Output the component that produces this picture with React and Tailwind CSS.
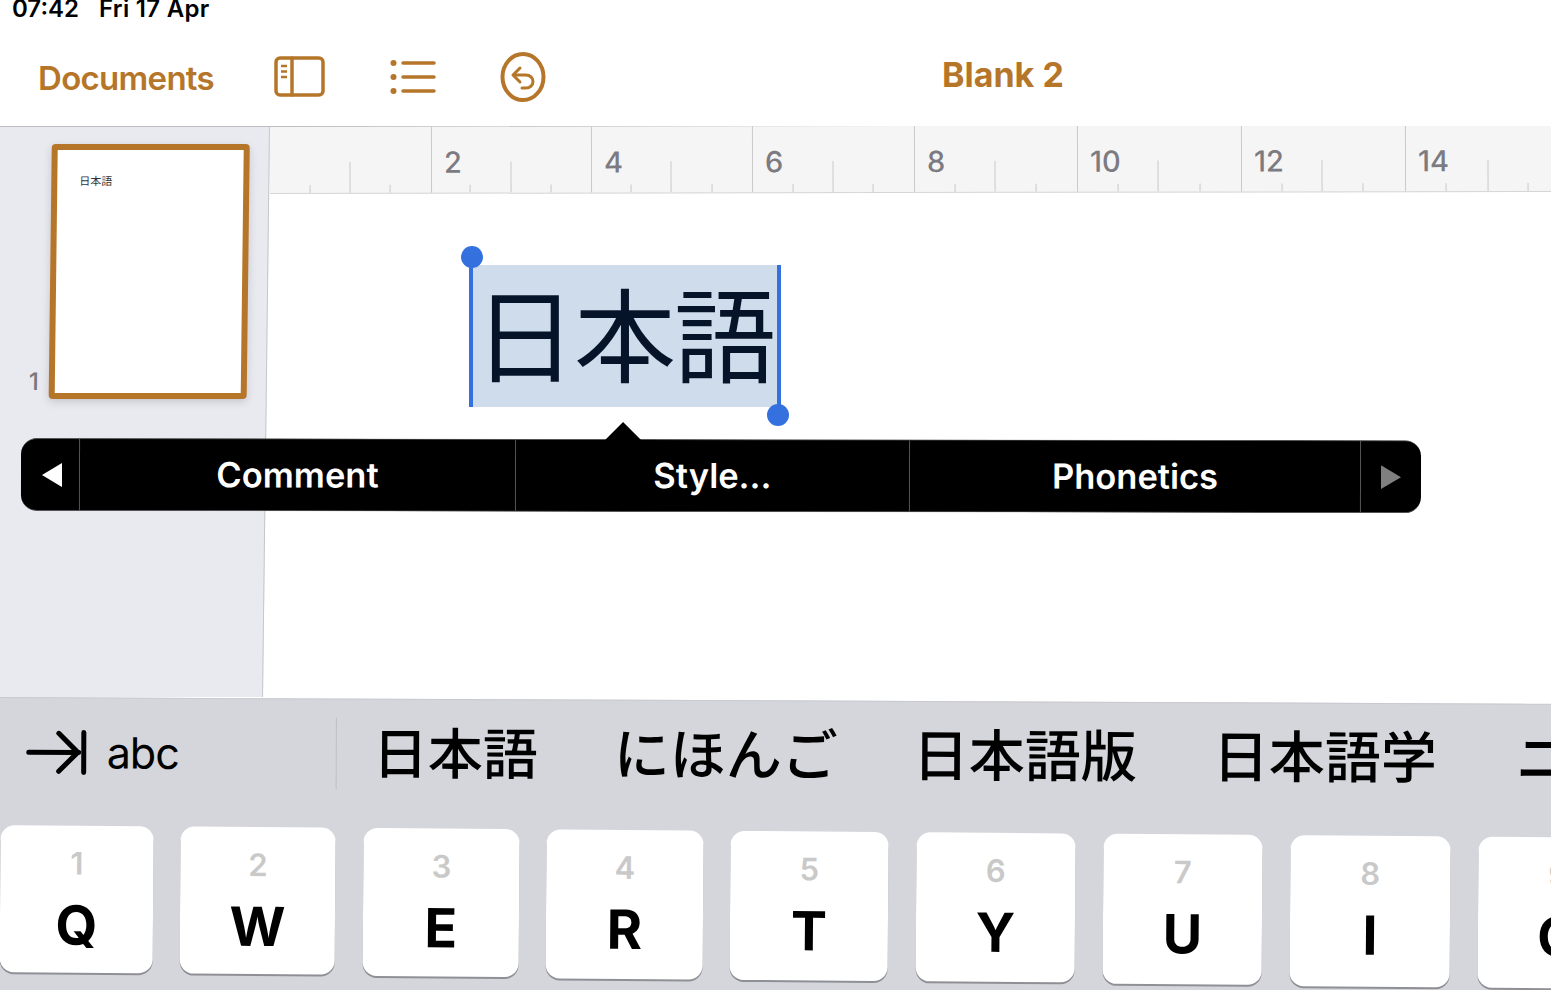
import React from "react";

const halfTicks = [80, 241, 401, 563, 725, 888, 1052, 1218];
const quarterTicks = [40, 120, 200, 281, 361, 442, 523, 603, 685, 766, 848, 930, 1012, 1093, 1176, 1258];

const rulerSegments = [
  { label: "2", width: "w-[160px]" },
  { label: "4", width: "w-[161px]" },
  { label: "6", width: "w-[162px]" },
  { label: "8", width: "w-[163px]" },
  { label: "10", width: "w-[164px]" },
  { label: "12", width: "w-[164px]" },
  { label: "14", width: "w-[170px]" },
];

const keys = [
  { num: "1", letter: "Q", size: "h-[147px] w-[153px]", gap: "mr-[27px]" },
  { num: "2", letter: "W", size: "h-[147px] w-[155px]", gap: "mr-[28px]" },
  { num: "3", letter: "E", size: "h-[148px] w-[156px]", gap: "mr-[27px]" },
  { num: "4", letter: "R", size: "h-[149px] w-[157px]", gap: "mr-[27px]" },
  { num: "5", letter: "T", size: "h-[149px] w-[158px]", gap: "mr-[28px]" },
  { num: "6", letter: "Y", size: "h-[149px] w-[159px]", gap: "mr-[28px]" },
  { num: "7", letter: "U", size: "h-[150px] w-[159px]", gap: "mr-[28px]" },
  { num: "8", letter: "I", size: "h-[151px] w-[160px]", gap: "mr-[28px]" },
  { num: "9", letter: "O", size: "h-[151px] w-[160px]", gap: "mr-[28px]" },
];

const SidebarIcon = () => (
  <svg width="52" height="42" viewBox="0 0 52 42" fill="none" stroke="#b6762a" strokeWidth="3.5" strokeLinecap="round">
    <rect x="2" y="2" width="47" height="37" rx="4" />
    <path d="M18 2v37" />
    <path d="M7 10h6M7 15.5h6M7 21h6" strokeWidth="2.5" strokeLinecap="butt" />
  </svg>
);

const ListIcon = () => (
  <svg width="46" height="36" viewBox="0 0 46 36" fill="none" stroke="#b6762a" strokeWidth="3.5" strokeLinecap="round">
    <path d="M13 4h31M13 18h31M13 32h31" />
    <circle cx="3.5" cy="4" r="3" fill="#b6762a" stroke="none" />
    <circle cx="3.5" cy="18" r="3" fill="#b6762a" stroke="none" />
    <circle cx="3.5" cy="32" r="3" fill="#b6762a" stroke="none" />
  </svg>
);

const UndoIcon = () => (
  <svg width="46" height="50" viewBox="0 0 46 50" fill="none" stroke="#b6762a" strokeWidth="4" strokeLinecap="round" strokeLinejoin="round">
    <ellipse cx="23" cy="25" rx="20.5" ry="23" />
    <path d="M20 16l-7 7 7 7" strokeWidth="3" />
    <path d="M14 23h12c4 0 7 3 7 6.5S30 36 26 36h-4" strokeWidth="3" />
  </svg>
);

const TabArrow = () => (
  <svg width="62" height="48" viewBox="0 0 62 48" fill="none" stroke="#000" strokeWidth="5" strokeLinecap="round" strokeLinejoin="round">
    <path d="M3 24h50" />
    <path d="M33 5l19 19-19 19" />
    <path d="M58 4v40" />
  </svg>
);

const Ruler = () => (
  <div className="relative h-[68px] w-[1320px] origin-left -rotate-[0.09deg] border-t border-b border-t-[#bdbdc1] border-b-[#d6d6d6] bg-[#f5f5f5]">
    <svg className="absolute top-0 left-0" width="1320" height="66" fill="none" stroke="#c9c9c9" strokeWidth="1">
      {halfTicks.map((x) => (
        <line key={x} x1={x} x2={x} y1="35" y2="66" />
      ))}
      {quarterTicks.map((x) => (
        <line key={x} x1={x} x2={x} y1="58" y2="66" />
      ))}
    </svg>
    <div className="flex h-full pl-[161px]">
      {rulerSegments.map((s) => (
        <div key={s.label} className={`${s.width} h-full shrink-0 border-l border-[#c9c9c9] pt-[19px] pl-[12px] text-[29px] leading-[34px] font-medium text-[#7b7b81]`}>
          {s.label}
        </div>
      ))}
    </div>
  </div>
);

const Sidebar = () => (
  <div className="-ml-4 h-full w-[286px] shrink-0 origin-top-left -skew-x-[0.7deg] border-t border-r border-t-[#bdbdc1] border-r-[#c6c6cb] bg-[#e9e9f0] pt-[17px] pl-[48px]">
    <div className="flex items-end gap-[10px]">
      <span className="mb-[3px] text-[24px] leading-[28px] font-medium text-[#77777d]">1</span>
      <div className="h-[255px] w-[198px] rounded-[4px] border-[6px] border-[#b6762a] bg-white pt-[24px] pl-[22px] shadow-[0_3px_8px_rgba(0,0,0,0.15)]">
        <p className="text-[11px] leading-[14px] text-[#333]">日本語</p>
      </div>
    </div>
  </div>
);

const Selection = () => (
  <div className="relative h-[142px] w-[308px] bg-[#cfdcec] pt-[2px] pl-[3px] text-[102px] leading-[142px] tracking-[-2px] whitespace-nowrap text-[#06142a]">
    日本語
    <span className="absolute top-0 -left-[2px] h-[142px] w-[4px] bg-[#3470de]" />
    <span className="absolute -top-[19px] -left-[10px] size-[22px] rounded-full bg-[#3470de]" />
    <span className="absolute top-0 -right-[2px] h-[142px] w-[4px] bg-[#3470de]" />
    <span className="absolute -right-[10px] -bottom-[19px] size-[22px] rounded-full bg-[#3470de]" />
  </div>
);

const PopupMenu = () => (
  <div className="absolute top-[438px] left-[21px] flex h-[73px] w-[1400px] origin-left rotate-[0.09deg] items-center rounded-[16px] border-y border-[#555] bg-black text-[34.5px] font-semibold text-white">
    <span className="absolute -top-[18px] left-[584px] size-0 border-x-[18px] border-b-[18px] border-x-transparent border-b-black" />
    <div className="flex h-full w-[58px] items-center justify-center pl-[4px]">
      <svg width="20" height="24" viewBox="0 0 20 24" fill="#fff">
        <path d="M20 0v24L0 12z" />
      </svg>
    </div>
    <div className="flex h-full w-[436px] items-center justify-center border-l border-[#555]">Comment</div>
    <div className="flex h-full w-[394px] items-center justify-center border-l border-[#555]">Style...</div>
    <div className="flex h-full w-[451px] items-center justify-center border-l border-[#555]">Phonetics</div>
    <div className="flex h-full flex-1 items-center justify-center border-l border-[#555]">
      <svg width="20" height="24" viewBox="0 0 20 24" fill="#7f7f7f">
        <path d="M0 0v24l20-12z" />
      </svg>
    </div>
  </div>
);

const Keyboard = () => (
  <div className="-ml-2 h-[320px] w-[1580px] origin-top-left rotate-[0.25deg] border-t border-[#c9cad0] bg-[#d5d6dc] pl-2">
    <div className="flex h-[127px] items-center pb-[20px] whitespace-nowrap text-black">
      <div className="flex w-[337px] shrink-0 items-center border-r border-[#bfc0c6] py-[12px] pl-[26px]">
        <TabArrow />
        <span className="ml-[19px] text-[43px] leading-[48px] tracking-[-1px]">abc</span>
      </div>
      <span className="ml-[36px] shrink-0 text-[55px] leading-[60px] font-medium">日本語</span>
      <span className="ml-[76px] shrink-0 text-[56px] leading-[60px] font-medium">にほんご</span>
      <span className="ml-[75px] shrink-0 text-[56px] leading-[60px] font-medium">日本語版</span>
      <span className="ml-[76px] shrink-0 text-[56px] leading-[60px] font-medium">日本語学</span>
      <span className="ml-[79px] shrink-0 text-[56px] leading-[60px] font-medium">ニ</span>
    </div>
    <div className="flex w-[1620px] origin-left rotate-[0.2deg] pl-[1px]">
      {keys.map((k) => (
        <div key={k.letter} className={`${k.size} ${k.gap} flex shrink-0 flex-col items-center rounded-[14px] bg-white pt-[20px] shadow-[0_2px_0_#8f9096]`}>
          <span className="text-[31px] leading-[36px] font-semibold text-[#c9c9c9]">{k.num}</span>
          <span className="mt-[12px] text-[54px] leading-[64px] font-bold text-black">{k.letter}</span>
        </div>
      ))}
    </div>
  </div>
);

export default function App() {
  return (
    <div className="relative h-[990px] w-[1551px] overflow-hidden bg-white font-['Inter','Noto_Sans_CJK_JP',sans-serif]">
      <div className="flex h-[25px] items-end gap-[20px] pb-[4px] pl-[12px] text-[24px] leading-[24px] font-semibold text-black">
        <span>07:42</span>
        <span className="tracking-[0.3px]">Fri 17 Apr</span>
      </div>

      <div className="flex h-[101px] items-center pt-[3px] text-[#b6762a]">
        <span className="mt-[2px] ml-[38px] w-[236px] text-[33px] leading-[40px] font-semibold tracking-[-0.7px]">Documents</span>
        <SidebarIcon />
        <span className="ml-[64px]">
          <ListIcon />
        </span>
        <span className="ml-[64px]">
          <UndoIcon />
        </span>
        <span className="-mt-[5px] ml-[396px] text-[34px] leading-[40px] font-bold">Blank 2</span>
      </div>

      <div className="flex h-[571px] overflow-hidden">
        <Sidebar />
        <div className="min-w-0 flex-1">
          <Ruler />
          <div className="pt-[71px] pl-[201px]">
            <Selection />
          </div>
        </div>
      </div>

      <PopupMenu />
      <Keyboard />
    </div>
  );
}
